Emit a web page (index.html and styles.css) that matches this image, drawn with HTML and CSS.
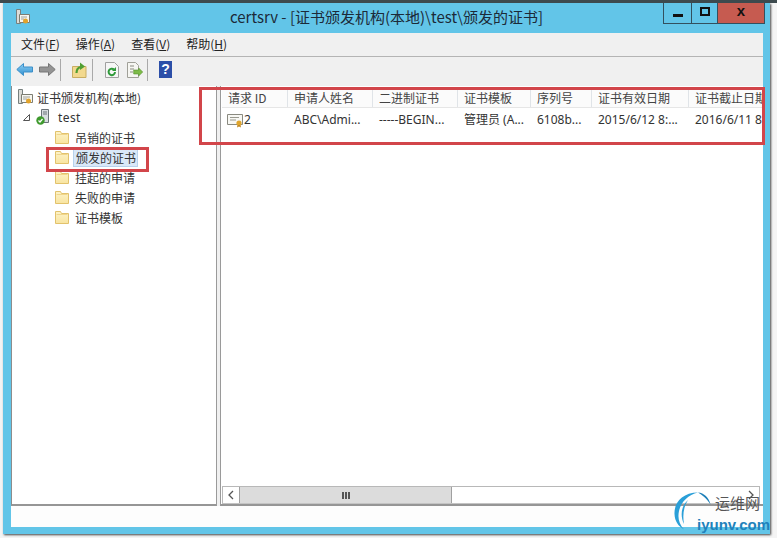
FILE: index.html
```html
<!DOCTYPE html>
<html lang="zh-CN">
<head>
  <meta charset="UTF-8">
  <title>certsrv</title>
  <link rel="stylesheet" href="styles.css">
</head>
<body>
  <svg class="defs" width="0" height="0">
    <defs>
      <linearGradient id="blue-arrow" x1="0" y1="0" x2="0" y2="1">
        <stop offset="0" stop-color="#8fd0f4"/>
        <stop offset="1" stop-color="#2f8fd0"/>
      </linearGradient>
      <linearGradient id="folder-fill" x1="0" y1="0" x2="0" y2="1">
        <stop offset="0" stop-color="#fdf3c8"/>
        <stop offset="1" stop-color="#f8e4a0"/>
      </linearGradient>
    </defs>
    <symbol id="folder" viewBox="0 0 16 16">
      <path d="M1.500 2.500h5l1 2h7v10h-13z" fill="url(#folder-fill)" stroke="#e2c26c"/>
      <path d="M2.500 5.500h11" stroke="#f0d68c"/>
    </symbol>
    <symbol id="cert" viewBox="0 0 18 16">
      <path d="M1.500 2.500h15v10h-15z" fill="#f8f8f4" stroke="#8a8a80"/>
      <path d="M4 5.500h9M4 8h6" stroke="#9a9a90"/>
      <circle cx="13" cy="11" r="2.600" fill="#e0a52c"/>
      <path d="M11.500 13l-.5 2.500 2-1 2 1-.5-2.500z" fill="#c08820"/>
    </symbol>
  </svg>

  <div class="window">
    <div class="titlebar">
      <svg class="app-icon" width="16" height="18" viewBox="0 0 16 18">
        <path d="M2.500 1.500h4v14h-4z" fill="#dcdcd8" stroke="#77807f"/>
        <path d="M5.500 6.500h10v8h-10z" fill="#f7f7f2" stroke="#7d7d72"/>
        <path d="M7 9h6M7 11h3" stroke="#a0a098"/>
        <circle cx="11.500" cy="13" r="2.500" fill="#e2a32a"/>
      </svg>
      <div class="title">certsrv - [证书颁发机构(本地)\test\颁发的证书]</div>
      <div class="caption-btns">
        <div class="cap-btn cap-min"><span class="glyph-min"></span></div>
        <div class="cap-btn cap-max"><span class="glyph-max"></span></div>
        <div class="cap-btn cap-close">x</div>
      </div>
    </div>

    <div class="client">
      <div class="menubar">
        <span class="menu-item">文件(<u>F</u>)</span>
        <span class="menu-item">操作(<u>A</u>)</span>
        <span class="menu-item">查看(<u>V</u>)</span>
        <span class="menu-item">帮助(<u>H</u>)</span>
      </div>

      <div class="toolbar">
        <svg class="tool tool-back" width="17" height="13" viewBox="0 0 17 13">
          <path d="M.8 6.500l6.700-6v3.500h9v5h-9v3.500z" fill="url(#blue-arrow)" stroke="#3c8fc8"/>
        </svg>
        <svg class="tool tool-fwd" width="17" height="13" viewBox="0 0 17 13">
          <path d="M16.200 6.500l-6.700-6v3.500h-9v5h9v3.500z" fill="#949494" stroke="#767676"/>
        </svg>
        <span class="tool-sep sep-a"></span>
        <svg class="tool tool-up" width="15" height="16" viewBox="0 0 15 16">
          <path d="M.5 4.500h13.500v11h-13.500z" fill="#f2d98e" stroke="#c8ad62"/>
          <path d="M4.500 11c0-4 2-5.500 4.500-6" fill="none" stroke="#4f9e32" stroke-width="2.200"/>
          <path d="M8 .5l5 4-5 3.500z" fill="#4f9e32"/>
        </svg>
        <span class="tool-sep sep-b"></span>
        <svg class="tool tool-refresh" width="14" height="16" viewBox="0 0 14 16">
          <path d="M.5 .5h9l4 4v11h-13z" fill="#f6f6f6" stroke="#a0a0a0"/>
          <path d="M10 10a3.200 3.200 0 1 1-1-2.400" fill="none" stroke="#2f9a3a" stroke-width="2"/>
          <path d="M11 5v4h-4z" fill="#2f9a3a"/>
        </svg>
        <svg class="tool tool-export" width="16" height="16" viewBox="0 0 16 16">
          <path d="M.5 .5h8l3 3v12h-11z" fill="#f6f6f2" stroke="#a0a098"/>
          <path d="M3 4h4M3 7h4M3 10h3" stroke="#8a8a80"/>
          <path d="M15.700 10l-4-4v2h-5v4h5v2z" fill="#7dbb48" stroke="#56922e" stroke-width=".6"/>
        </svg>
        <span class="tool-sep sep-c"></span>
        <div class="tool-help">?</div>
      </div>

      <div class="panes">
        <div class="tree">
          <div class="tree-row">
            <svg class="icon-root" width="18" height="18" viewBox="0 0 18 18">
              <path d="M2.500 1.500h4v14h-4z" fill="#dcdcd8" stroke="#77807f"/>
              <path d="M5.500 6.500h11v8h-11z" fill="#f7f7f2" stroke="#7d7d72"/>
              <path d="M7 9h7M7 11h4" stroke="#a0a098"/>
              <circle cx="12.500" cy="13" r="2.500" fill="#e2a32a"/>
            </svg>
            <span>证书颁发机构(本地)</span>
          </div>
          <div class="tree-row row-server">
            <svg class="expander" width="7" height="7" viewBox="0 0 7 7"><path d="M6.500 .5v6h-6z" fill="#fff" stroke="#555"/></svg>
            <svg class="icon-server" width="14" height="16" viewBox="0 0 14 16">
              <path d="M5.500 .5h7v13h-7z" fill="#d8dce0" stroke="#6a7278"/>
              <path d="M7 3h4M7 5h4" stroke="#6a7278"/>
              <circle cx="4.500" cy="11.500" r="4.200" fill="#3f9a2e"/>
              <path d="M2.500 11.500l1.500 1.500 2.500-3" fill="none" stroke="#fff" stroke-width="1.300"/>
            </svg>
            <span class="latin">test</span>
          </div>
          <div class="tree-row row-child"><svg class="icon-folder" width="16" height="16"><use href="#folder"/></svg><span>吊销的证书</span></div>
          <div class="tree-row row-child"><svg class="icon-folder" width="16" height="16"><use href="#folder"/></svg><span class="selected">颁发的证书</span></div>
          <div class="tree-row row-child"><svg class="icon-folder" width="16" height="16"><use href="#folder"/></svg><span>挂起的申请</span></div>
          <div class="tree-row row-child"><svg class="icon-folder" width="16" height="16"><use href="#folder"/></svg><span>失败的申请</span></div>
          <div class="tree-row row-child"><svg class="icon-folder" width="16" height="16"><use href="#folder"/></svg><span>证书模板</span></div>
        </div>

        <div class="splitter"></div>

        <div class="list">
          <div class="list-body">
            <div class="list-head">
              <div class="col col-1">请求 ID</div>
              <div class="col col-2">申请人姓名</div>
              <div class="col col-3">二进制证书</div>
              <div class="col col-4">证书模板</div>
              <div class="col col-5">序列号</div>
              <div class="col col-6">证书有效日期</div>
              <div class="col col-7">证书截止日期</div>
            </div>
            <div class="list-row">
              <div class="col col-1 cell-id"><svg width="18" height="16"><use href="#cert"/></svg>2</div>
              <div class="col col-2">ABC\Admi...</div>
              <div class="col col-3">-----BEGIN...</div>
              <div class="col col-4">管理员 (A...</div>
              <div class="col col-5">6108b...</div>
              <div class="col col-6">2015/6/12 8:...</div>
              <div class="col col-7">2016/6/11 8:...</div>
            </div>
          </div>
          <div class="hscroll">
            <div class="scroll-btn">
              <svg width="6" height="10" viewBox="0 0 6 10"><path d="M5 1l-4 4 4 4" fill="none" stroke="#555" stroke-width="1.300"/></svg>
            </div>
            <div class="scroll-thumb"><span></span><span></span><span></span></div>
            <div class="scroll-track"></div>
            <div class="scroll-btn">
              <svg width="6" height="10" viewBox="0 0 6 10"><path d="M1 1l4 4-4 4" fill="none" stroke="#555" stroke-width="1.300"/></svg>
            </div>
          </div>
        </div>
      </div>

      <div class="statusbar"></div>
    </div>
  </div>

  <!-- annotations on top of the screenshot -->
  <div class="mark mark-tree"></div>
  <div class="mark mark-list"></div>

  <div class="watermark">
    <svg class="wm-logo" width="37" height="38" viewBox="0 0 37 38">
      <path d="M24 .5C9 .5 0 10 .5 22c.3 7 3.500 12 9.500 15.500C5 32 3.500 26 5 19 7 10 14 3 24 .5z" fill="#2a9fd8"/>
      <path d="M24 .5c6 .5 11 5 12.500 12C32.500 6 28 3 24 .5z" fill="#1d7fb8"/>
      <path d="M14 8C7 14 6 24 10 32 8.500 23 9.500 15 14 8z" fill="#2a9fd8"/>
    </svg>
    <span class="wm-cn">运维网</span>
    <span class="wm-en">iyunv.com</span>
  </div>
</body>
</html>
```

FILE: styles.css
```css
* {
  box-sizing: border-box;
}
html, body {
  margin: 0;
  padding: 0;
}
body {
  width: 777px;
  height: 538px;
  overflow: hidden;
  position: relative;
  background-color: #f4f4f4;
  border-top: 3px solid #3d4a4e;
  font-family: "Noto Sans CJK SC", "Noto Sans", sans-serif;
  font-size: 12px;
  color: #333;
}
.defs {
  position: absolute;
}

/* window frame */
.window {
  width: 767px;
  height: 531px;
  margin-left: 3px;
  padding: 0 7px 7px 8px;
  display: flex;
  flex-direction: column;
  background-color: #62c5e8;
  box-shadow: 1px 1px 2px #444;
}
.titlebar {
  height: 30px;
  flex: none;
  display: grid;
  grid-template-columns: 1fr auto 1fr;
  margin-right: -7px;
  margin-left: -8px;
}
.app-icon {
  margin: 5px 0 0 11px;
}
.title {
  font-size: 15px;
  line-height: 20px;
  padding-top: 4px;
  color: #1c2a38;
}
.caption-btns {
  justify-self: end;
  display: flex;
  height: 21px;
  margin-right: 5px;
  border: 1px solid #33505e;
  border-top: none;
}
.cap-btn {
  display: flex;
  align-items: center;
  justify-content: center;
}
.cap-min {
  width: 28px;
  border-right: 1px solid #33505e;
}
.cap-max {
  width: 26px;
  border-right: 1px solid #33505e;
}
.cap-close {
  width: 46px;
  background-color: #c65b50;
  color: #111;
  font-family: "Liberation Sans", sans-serif;
  font-size: 15px;
  font-weight: bold;
  padding-bottom: 5px;
}
.glyph-min {
  width: 10px;
  height: 3px;
  margin-top: 5px;
  background-color: #111;
}
.glyph-max {
  width: 10px;
  height: 9px;
  margin-bottom: 4px;
  border: 2px solid #111;
}
.client {
  flex: 1;
  display: flex;
  flex-direction: column;
  min-height: 0;
  background-color: #f0f0f0;
}

/* menu + toolbar */
.menubar {
  height: 24px;
  flex: none;
  display: flex;
  gap: 16px;
  padding: 0 0 2px 10px;
  align-items: center;
  border-bottom: 1px solid #b4b4b4;
  color: #222;
}
.menu-item {
  line-height: 20px;
}
.toolbar {
  height: 29px;
  flex: none;
  display: flex;
  align-items: center;
  padding: 0 0 4px 5px;
}
.tool {
  flex: none;
}
.tool-fwd {
  margin-left: 6px;
}
.tool-sep {
  width: 1px;
  height: 22px;
  flex: none;
  background-color: #a9a9a9;
}
.sep-a {
  margin-left: 4px;
}
.tool-up {
  margin-left: 11px;
}
.sep-b {
  margin-left: 5px;
}
.tool-refresh {
  margin-left: 12px;
}
.tool-export {
  margin-left: 8px;
}
.sep-c {
  margin-left: 4px;
}
.tool-help {
  width: 13px;
  height: 17px;
  margin-left: 11px;
  background-color: #2c4fa8;
  color: #fff;
  font-family: "Liberation Sans", sans-serif;
  font-size: 14px;
  font-weight: bold;
  line-height: 17px;
  text-align: center;
}

/* panes */
.panes {
  height: 420px;
  flex: none;
  display: flex;
}
.tree {
  width: 206px;
  flex: none;
  padding-top: 1px;
  background-color: #fff;
  border-right: 1px solid #9a9a9a;
  border-bottom: 2px solid #969696;
  border-left: 1px solid #8c8c8c;
}
.tree-row {
  height: 20px;
  display: flex;
  align-items: center;
  padding-left: 4px;
  color: #333;
}
.icon-root {
  margin-right: 3px;
}
.row-server {
  padding-left: 11px;
}
.icon-server {
  margin-left: 6px;
  margin-right: 8px;
}
.latin {
  font-family: "Noto Sans", sans-serif;
  letter-spacing: .4px;
}
.row-child {
  padding-left: 42px;
}
.icon-folder {
  margin-right: 5px;
}
.selected {
  margin-left: -2px;
  padding: 0 1px 0 2px;
  line-height: 17px;
  background-color: #d9e8f8;
  border: 1px solid #b7d2ec;
}
.splitter {
  width: 3px;
  flex: none;
  background-color: #f0f0f0;
}
.list {
  flex: 1;
  min-width: 0;
  display: flex;
  flex-direction: column;
  padding-left: 1px;
  background-color: #fff;
  border-left: 1px solid #9a9a9a;
  border-bottom: 2px solid #969696;
}
.list-body {
  flex: 1;
  min-height: 0;
  overflow: hidden;
  padding-top: 2px;
}
.list-head {
  display: flex;
  height: 20px;
  line-height: 19px;
  background-color: #fff;
  border-bottom: 1px solid #e6e6e6;
  color: #444;
}
.list-head .col {
  border-right: 1px solid #e0e4e8;
  background-color: #fbfbfb;
}
.col {
  flex: none;
  padding-left: 6px;
  white-space: nowrap;
  overflow: hidden;
}
.col-1 { width: 66px; }
.col-2 { width: 85px; }
.col-3 { width: 85px; }
.col-4 { width: 73px; }
.col-5 { width: 61px; }
.col-6 { width: 97px; }
.col-7 { width: 74px; }
.list-row {
  display: flex;
  height: 20px;
  line-height: 20px;
  margin-top: 2px;
  color: #333;
  font-family: "Noto Sans", "Noto Sans CJK SC", sans-serif;
}
.cell-id {
  display: flex;
  align-items: center;
  padding-left: 4px;
}

/* horizontal scroll bar */
.hscroll {
  height: 18px;
  flex: none;
  display: flex;
  margin-right: 3px;
  border: 1px solid #b8b8b8;
  border-bottom-color: #c4c4c4;
}
.scroll-btn {
  width: 16px;
  flex: none;
  display: flex;
  align-items: center;
  justify-content: center;
}
.scroll-thumb {
  width: 213px;
  flex: none;
  display: flex;
  gap: 1px;
  align-items: center;
  justify-content: center;
  background-color: #dcdcdc;
  border-right: 1px solid #a0a0a0;
  border-left: 1px solid #a0a0a0;
}
.scroll-thumb span {
  width: 2px;
  height: 7px;
  background-color: #555;
}
.scroll-track {
  flex: 1;
  background-color: #fff;
}
.statusbar {
  flex: 1;
  background-color: #fdfdfd;
}

/* red annotation boxes */
.mark {
  position: absolute;
  border: 3px solid #d2454a;
}
.mark-tree {
  left: 46px;
  top: 144px;
  width: 103px;
  height: 25px;
}
.mark-list {
  left: 199px;
  top: 84px;
  width: 566px;
  height: 58px;
}

/* watermark bottom right */
.watermark {
  position: absolute;
  left: 672px;
  top: 486px;
  width: 105px;
  height: 49px;
}
.wm-logo {
  position: absolute;
  left: 2px;
  top: 3px;
}
.wm-cn {
  position: absolute;
  left: 43px;
  top: 4px;
  font-size: 15px;
  line-height: 20px;
  color: #555;
}
.wm-en {
  position: absolute;
  left: 25px;
  top: 26px;
  font-family: "Liberation Sans", sans-serif;
  font-size: 15px;
  line-height: 20px;
  font-weight: bold;
  color: #1f82bb;
}
```
